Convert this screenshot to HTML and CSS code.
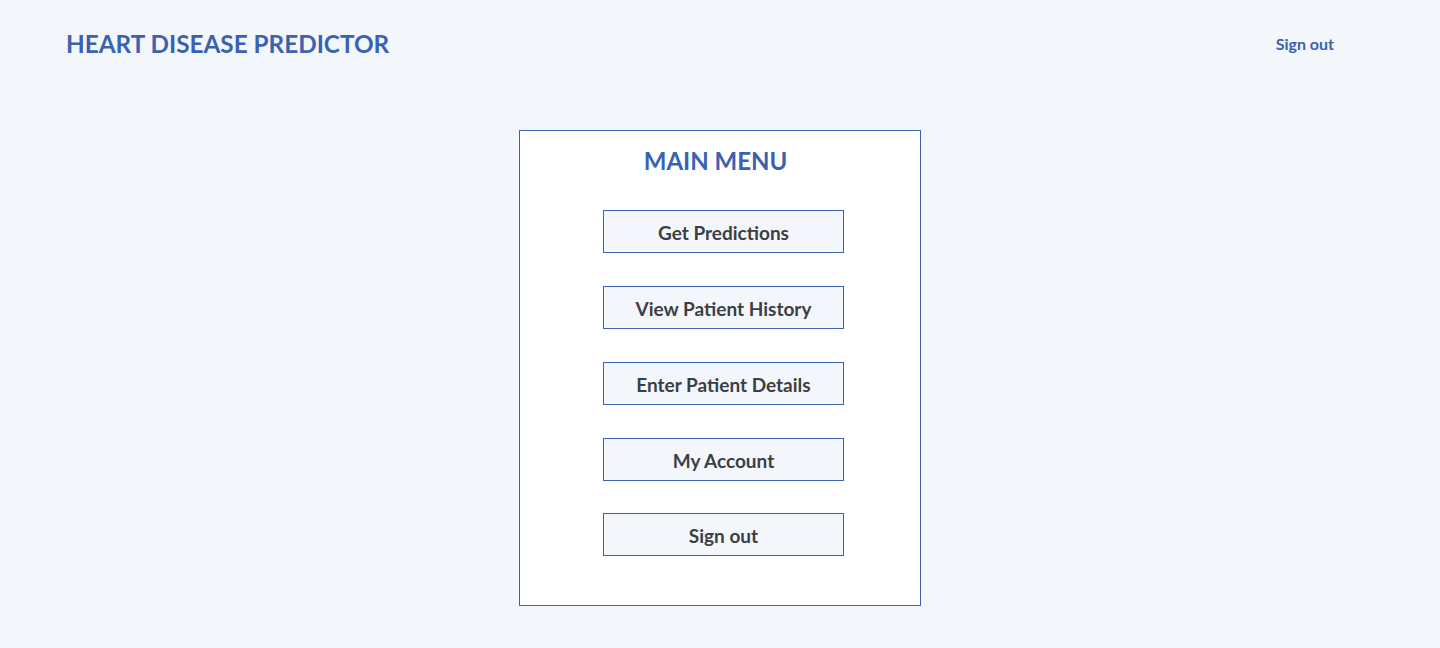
FILE: index.html
```html
<!DOCTYPE html>
<html lang="en">
<head>
<meta charset="utf-8">
<title>Heart Disease Predictor</title>
<link rel="stylesheet" href="styles.css">
</head>
<body>
<header class="topbar">
  <h1 class="brand">HEART DISEASE PREDICTOR</h1>
  <a class="top-signout" href="#">Sign out</a>
</header>
<main class="menu-card">
  <h2 class="menu-title">MAIN MENU</h2>
  <div class="menu-list">
    <button class="menu-btn">Get Predictions</button>
    <button class="menu-btn">View Patient History</button>
    <button class="menu-btn">Enter Patient Details</button>
    <button class="menu-btn">My Account</button>
    <button class="menu-btn menu-btn-last">Sign out</button>
  </div>
</main>
</body>
</html>
```
FILE: styles.css
```css
* { box-sizing: border-box; }
html, body { margin: 0; padding: 0; }
body {
  background: #f3f6fb;
  font-family: Lato, "Open Sans", sans-serif;
  width: 1440px;
  height: 648px;
  overflow: hidden;
}
.topbar {
  height: 88px;
  display: flex;
  align-items: center;
  justify-content: space-between;
  padding: 0 106px 0 66px;
}
.brand {
  margin: 0;
  font-size: 24.3px;
  font-weight: 700;
  color: #3a62b0;
  line-height: 1.2;
}
.top-signout {
  font-size: 16px;
  font-weight: 700;
  color: #3a62b0;
  text-decoration: none;
  margin-bottom: 2px;
}
.menu-card {
  width: 402px;
  height: 476px;
  margin: 42px auto 0;
  background: #ffffff;
  border: 1px solid #3a62b0;
  padding-top: 16px;
}
.menu-title {
  margin: 0;
  text-align: center;
  font-size: 24px;
  font-weight: 700;
  color: #3a62b0;
  line-height: 1.2;
  padding-right: 9px;
}
.menu-list {
  display: flex;
  flex-direction: column;
  align-items: center;
  gap: 33px;
  margin-top: 34px;
  padding-left: 7px;
}
.menu-btn {
  width: 241px;
  height: 43px;
  background: #f3f6fb;
  border: 1px solid #3a62b0;
  border-radius: 0;
  font-family: Lato, "Open Sans", sans-serif;
  font-size: 19px;
  font-weight: 700;
  color: #3b3f45;
  padding: 2px 0 0;
  cursor: pointer;
}
.menu-btn-last {
  margin-top: -1px;
}
```
